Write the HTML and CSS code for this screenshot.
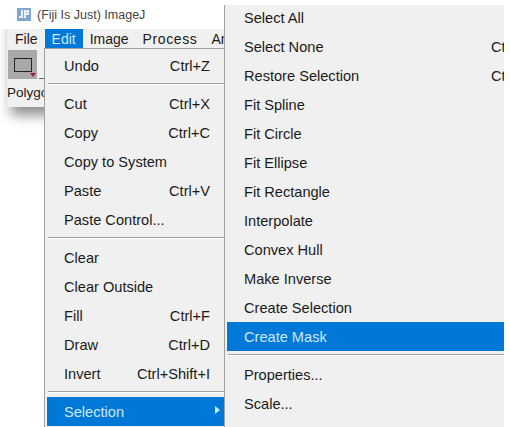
FILE: index.html
```html
<!DOCTYPE html>
<html lang="en">

<head>
    <meta charset="UTF-8">
    <title>(Fiji Is Just) ImageJ</title>
    <link rel="stylesheet" href="styles.css">
</head>

<body>
    <div class="page">
        <div class="window">
            <div class="titlebar">
                <svg class="app_icon" width="14" height="14" viewBox="0 0 14 14">
                    <rect width="14" height="13" fill="#7fa6cf" />
                    <path d="M4 2h2v8H2V8h2zM7 2h5v5H9v3H7zM9 4v1h1V4z" fill="#e8f0f8" />
                </svg>
                <span>(Fiji Is Just) ImageJ</span>
            </div>
            <div class="menubar">
                <span class="menu_title">File</span>
                <span class="menu_title active">Edit</span>
                <span class="menu_title">Image</span>
                <span class="menu_title">Process</span>
                <span class="menu_title">Analyze</span>
            </div>
            <div class="toolbar">
                <div class="tool">
                    <span class="tool_rect"></span>
                    <span class="tool_arrow"></span>
                </div>
                <span class="tool_next"></span>
            </div>
            <div class="status">Polygon</div>
        </div>

        <!-- Edit 菜单 -->
        <div class="menu edit_menu">
            <div class="item"><span>Undo</span><span>Ctrl+Z</span></div>
            <div class="sep"></div>
            <div class="item"><span>Cut</span><span>Ctrl+X</span></div>
            <div class="item"><span>Copy</span><span>Ctrl+C</span></div>
            <div class="item"><span>Copy to System</span></div>
            <div class="item"><span>Paste</span><span>Ctrl+V</span></div>
            <div class="item"><span>Paste Control...</span></div>
            <div class="sep"></div>
            <div class="item"><span>Clear</span></div>
            <div class="item"><span>Clear Outside</span></div>
            <div class="item"><span>Fill</span><span>Ctrl+F</span></div>
            <div class="item"><span>Draw</span><span>Ctrl+D</span></div>
            <div class="item"><span>Invert</span><span>Ctrl+Shift+I</span></div>
            <div class="sep"></div>
            <div class="item selected"><span>Selection</span><span class="arrow"></span></div>
        </div>

        <!-- Selection 子菜单 -->
        <div class="menu sub_menu">
            <div class="item first"><span>Select All</span></div>
            <div class="item"><span class="label">Select None</span><span>Ctrl+Shift+A</span></div>
            <div class="item"><span class="label">Restore Selection</span><span>Ctrl+Shift+E</span></div>
            <div class="item"><span>Fit Spline</span></div>
            <div class="item"><span>Fit Circle</span></div>
            <div class="item"><span>Fit Ellipse</span></div>
            <div class="item"><span>Fit Rectangle</span></div>
            <div class="item"><span>Interpolate</span></div>
            <div class="item"><span>Convex Hull</span></div>
            <div class="item"><span>Make Inverse</span></div>
            <div class="item"><span>Create Selection</span></div>
            <div class="item selected"><span>Create Mask</span></div>
            <div class="sep"></div>
            <div class="item"><span>Properties...</span></div>
            <div class="item"><span>Scale...</span></div>
        </div>
    </div>
</body>

</html>
```

FILE: styles.css
```css
* {
    margin: 0px;
    padding: 0px;
    box-sizing: border-box;
}

body {
    background-color: #fff;
    font-family: "Liberation Sans", Arial, sans-serif;
    font-size: 14.6px;
    color: #1a1a1a;
    overflow: hidden;
}

.page {
    position: relative;
    width: 510px;
    height: 427px;
    overflow: hidden;
}

.window {
    width: 217px;
    margin-left: 7px;
    box-shadow: 0 12px 12px -4px rgba(0, 0, 0, 0.45);
    background-color: #f0f0f0;
}

.titlebar {
    display: flex;
    align-items: center;
    gap: 6px;
    height: 29px;
    margin-left: -7px;
    padding-left: 17px;
    background-color: #fff;
    font-size: 12.5px;
    color: #444;
}

.menubar {
    display: flex;
    height: 19px;
    padding-left: 1px;
    overflow: hidden;
    font-size: 14px;
    line-height: 20px;
}

.menu_title {
    padding: 0 7px;
}

/* Process 在原图里更宽一些 */
.menu_title:nth-child(4) {
    letter-spacing: 0.6px;
}

.menu_title.active {
    background-color: #0078d7;
    color: #cfe8ff;
}

.toolbar {
    display: flex;
    align-items: flex-end;
    height: 33px;
    padding-top: 2px;
    padding-bottom: 2px;
}

.tool {
    position: relative;
    width: 29px;
    height: 29px;
    margin-left: 1px;
    background-color: #a8a8a8;
}

.tool_rect {
    position: absolute;
    left: 6px;
    top: 8px;
    width: 18px;
    height: 14px;
    border: 1px solid #222;
}

.tool_arrow {
    position: absolute;
    right: 1px;
    bottom: 2px;
    border: 3px solid transparent;
    border-top: 4px solid #a02040;
    border-bottom: 0;
}

.tool_next {
    width: 6px;
    height: 1px;
    margin-left: 2px;
    background-color: #666;
}

.status {
    height: 26px;
    padding-top: 2px;
    font-size: 13.5px;
    line-height: 20px;
}

.menu {
    position: absolute;
    background-color: #f0f0f0;
    overflow: hidden;
}

.edit_menu {
    left: 44px;
    top: 48px;
    width: 180px;
    height: 379px;
    padding: 2px 0 0 2px;
    border-left: 1px solid #a0a0a0;
    border-top: 1px solid #a0a0a0;
}

.sub_menu {
    left: 224px;
    top: 5px;
    width: 280px;
    height: 422px;
    padding-left: 2px;
    border-left: 1px solid #a0a0a0;
}

.item {
    display: flex;
    justify-content: space-between;
    align-items: center;
    height: 29px;
    padding: 0 14px 0 17px;
    white-space: nowrap;
}

.sub_menu .item {
    justify-content: flex-start;
    padding-right: 0;
}

.sub_menu .first {
    margin-top: -2px;
}

.sub_menu .label {
    flex: 0 0 247px;
}

.item.selected {
    background-color: #0078d7;
    color: #cfe8ff;
}

.arrow {
    margin-right: -10px;
    margin-bottom: 4px;
    border: 4px solid transparent;
    border-left: 5px solid #cfe8ff;
    border-right: 0;
}

.sep {
    height: 9px;
    padding-top: 3px;
}

.sep::after {
    content: "";
    display: block;
    height: 1px;
    margin-left: 1px;
    background-color: #a0a0a0;
    border-bottom: 1px solid #fff;
    box-sizing: content-box;
}
```
